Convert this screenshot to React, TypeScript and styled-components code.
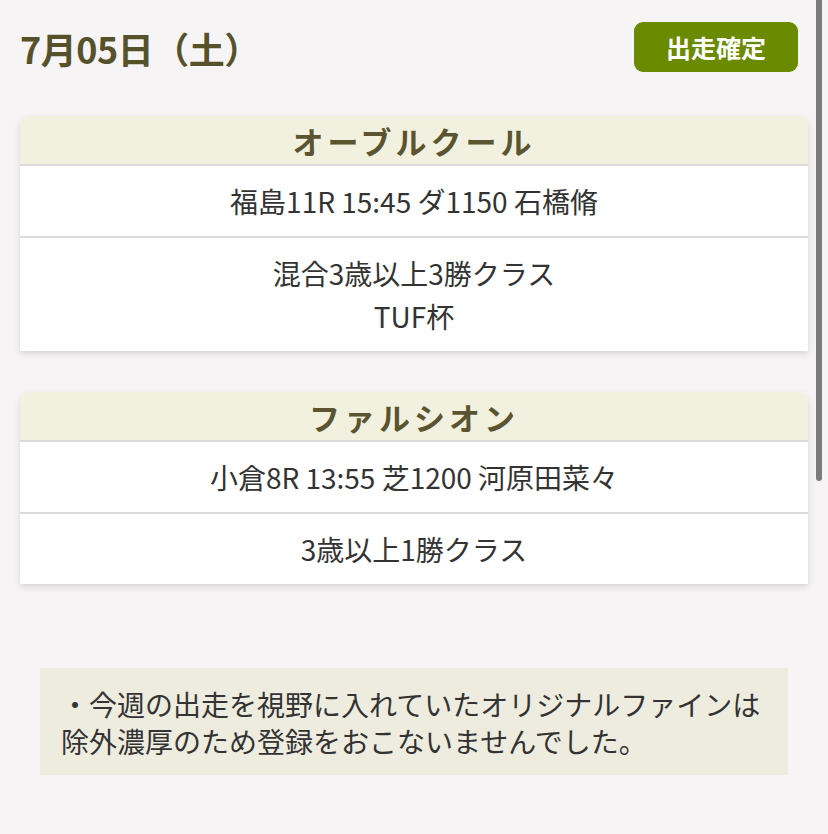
import React from 'react';
import styled, { createGlobalStyle } from 'styled-components';

const GlobalStyle = createGlobalStyle`
  html, body {
    margin: 0;
    padding: 0;
    background: #f6f4f5;
  }
  body {
    font-family: "Noto Sans CJK JP", "Noto Sans", sans-serif;
    color: #333;
  }
`;

const Page = styled.div`
  position: relative;
  min-height: 834px;
  padding: 22px 20px 40px;
  box-sizing: border-box;
`;

const Header = styled.div`
  display: flex;
  justify-content: space-between;
  align-items: center;
  height: 50px;
`;

const DateTitle = styled.h1`
  margin: 2px 0 0;
  font-size: 36px;
  font-weight: 700;
  color: #55512a;
  letter-spacing: -0.5px;
`;

const StatusButton = styled.button`
  width: 164px;
  height: 50px;
  margin-right: 10px;
  border: none;
  border-radius: 9px;
  background: #6a8a00;
  color: #fff;
  font-family: inherit;
  font-size: 25px;
  font-weight: 700;
  cursor: pointer;
`;

const Cards = styled.div`
  display: flex;
  flex-direction: column;
  gap: 41px;
  margin-top: 44px;
`;

const Card = styled.section`
  background: #fff;
  border-radius: 8px 8px 0 0;
  box-shadow: 0 3px 6px rgba(0, 0, 0, 0.13);
  overflow: hidden;
`;

const HorseName = styled.h2`
  margin: 0;
  height: 48px;
  line-height: 50px;
  text-align: center;
  background: #f2f1df;
  border-bottom: 2px solid #dcdcdc;
  font-size: 31px;
  font-weight: 700;
  color: #5a5530;
  letter-spacing: 4px;
`;

const Row = styled.div<{ $last?: boolean }>`
  padding: 13.5px 10px;
  line-height: 43px;
  text-align: center;
  font-size: 28px;
  color: #333;
  border-bottom: ${(p) => (p.$last ? 'none' : '2px solid #dcdcdc')};
`;

const Note = styled.div`
  margin: 84px 20px 0;
  padding: 18px 21px 15px;
  background: #eeecdf;
  font-size: 28px;
  line-height: 37px;
  color: #333;
`;

const Scrollbar = styled.div`
  position: fixed;
  top: 0;
  right: 6px;
  width: 6px;
  height: 481px;
  border-radius: 0 0 3px 3px;
  background: #7b7b7b;
`;

type Race = {
  name: string;
  info: string;
  race: string[];
};

const races: Race[] = [
  {
    name: 'オーブルクール',
    info: '福島11R 15:45 ダ1150 石橋脩',
    race: ['混合3歳以上3勝クラス', 'TUF杯'],
  },
  {
    name: 'ファルシオン',
    info: '小倉8R 13:55 芝1200 河原田菜々',
    race: ['3歳以上1勝クラス'],
  },
];

const App = () => {
  return (
    <Page>
      <GlobalStyle />
      <Header>
        <DateTitle>7月05日（土）</DateTitle>
        <StatusButton>出走確定</StatusButton>
      </Header>
      <Cards>
        {races.map((r) => (
          <Card key={r.name}>
            <HorseName>{r.name}</HorseName>
            <Row>{r.info}</Row>
            <Row $last>
              {r.race.map((line, i) => (
                <div key={i}>{line}</div>
              ))}
            </Row>
          </Card>
        ))}
      </Cards>
      <Note>
        ・今週の出走を視野に入れていたオリジナルファインは
        <br />
        除外濃厚のため登録をおこないませんでした。
      </Note>
      <Scrollbar />
    </Page>
  );
};

export default App;
